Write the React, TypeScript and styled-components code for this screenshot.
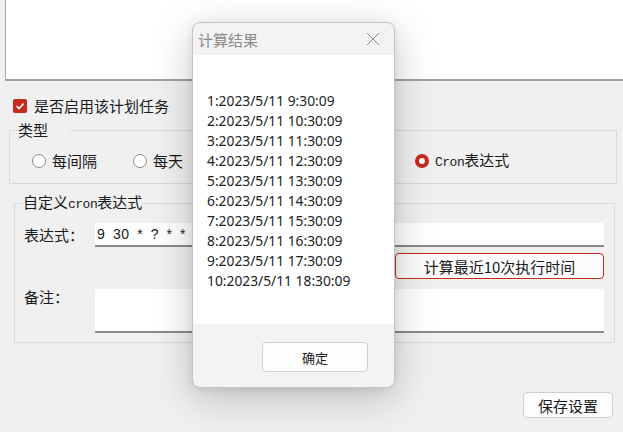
import styled, { createGlobalStyle } from 'styled-components';

const GlobalStyle = createGlobalStyle`
  html, body {
    margin: 0;
    padding: 0;
    background: #f0f0f0;
  }
  body {
    font-family: 'Noto Sans', 'Noto Sans CJK SC', sans-serif;
    color: #1a1a1a;
    overflow: hidden;
  }
`;

const CJK = `'Noto Sans CJK SC', 'Noto Sans', sans-serif`;
const ACCENT = '#c42b1c';

const runTimes = [
  '9:30:09',
  '10:30:09',
  '11:30:09',
  '12:30:09',
  '13:30:09',
  '14:30:09',
  '15:30:09',
  '16:30:09',
  '17:30:09',
  '18:30:09',
];

const App = () => {
  return (
    <>
      <GlobalStyle />
      <Page>
        <Description />
        <EnableRow>
          <CheckBox>
            <svg width="10" height="10" viewBox="0 0 10 10">
              <path d="M1.6 5.2 L4 7.5 L8.6 2.6" fill="none" stroke="#fff" strokeWidth="1.6" />
            </svg>
          </CheckBox>
          <EnableLabel>是否启用该计划任务</EnableLabel>
        </EnableRow>

        <TypeGroup>
          <GroupLegend>类型</GroupLegend>
          <RadioRow>
            <RadioOption $width={101}>
              <Radio />
              <RadioText>每间隔</RadioText>
            </RadioOption>
            <RadioOption $width={282}>
              <Radio />
              <RadioText>每天</RadioText>
            </RadioOption>
            <RadioOption>
              <Radio $checked />
              <RadioText>
                <Mono>Cron</Mono>表达式
              </RadioText>
            </RadioOption>
          </RadioRow>
        </TypeGroup>

        <CronGroup>
          <CronLegend>
            自定义<Mono>cron</Mono>表达式
          </CronLegend>
          <FieldRow $gap={8}>
            <FieldLabel>表达式：</FieldLabel>
            <TextInput readOnly value="9 30 * ? * *" />
          </FieldRow>
          <ButtonRow>
            <CalcButton>计算最近10次执行时间</CalcButton>
          </ButtonRow>
          <FieldRow $gap={6}>
            <FieldLabel>备注：</FieldLabel>
            <TextArea />
          </FieldRow>
        </CronGroup>

        <Footer>
          <SaveButton>保存设置</SaveButton>
        </Footer>

        <Dialog>
          <DialogTitle>
            <DialogTitleText>计算结果</DialogTitleText>
            <CloseIcon width="14" height="14" viewBox="0 0 14 14">
              <path d="M1 1 L13 13 M13 1 L1 13" stroke="#8a8a8a" strokeWidth="1" fill="none" />
            </CloseIcon>
          </DialogTitle>
          <DialogBody>
            {runTimes.map((time, i) => (
              <ResultLine key={time}>
                {i + 1}:2023/5/11 {time}
              </ResultLine>
            ))}
          </DialogBody>
          <DialogFooter>
            <OkButton>确定</OkButton>
          </DialogFooter>
        </Dialog>
      </Page>
    </>
  );
};

const Page = styled.div`
  position: relative;
  width: 623px;
  height: 432px;
  display: flex;
  flex-direction: column;
`;

const Description = styled.div`
  margin-left: 5px;
  height: 79px;
  background: #fff;
  border-left: 1px solid #a8a8a8;
  border-bottom: 2px solid #a0a0a0;
`;

const EnableRow = styled.div`
  display: flex;
  align-items: center;
  margin: 17px 0 0 13px;
  height: 16px;
`;

const CheckBox = styled.span`
  width: 14px;
  height: 14px;
  border-radius: 2px;
  background: ${ACCENT};
  display: flex;
  align-items: center;
  justify-content: center;
`;

const EnableLabel = styled.span`
  margin-left: 7px;
  font-family: ${CJK};
  font-size: 15px;
  line-height: 16px;
`;

const TypeGroup = styled.fieldset`
  margin: 6px 6px 0 9px;
  padding: 0 0 0 22px;
  height: 64px;
  box-sizing: border-box;
  border: 1px solid #dadada;
  border-radius: 0;
  min-width: 0;
`;

const GroupLegend = styled.legend`
  padding: 0;
  margin-left: 8px;
  font-family: ${CJK};
  font-size: 15px;
  line-height: 20px;
  transform: translateX(-22px);
`;

const RadioRow = styled.div`
  display: flex;
  align-items: center;
  height: 40px;
  margin-top: 1px;
`;

const RadioOption = styled.label<{ $width?: number }>`
  display: flex;
  align-items: center;
  width: ${({ $width }) => ($width ? `${$width}px` : 'auto')};
`;

const Radio = styled.span<{ $checked?: boolean }>`
  width: 14px;
  height: 14px;
  box-sizing: border-box;
  border-radius: 50%;
  background: #fff;
  border: ${({ $checked }) => ($checked ? `4px solid ${ACCENT}` : '1px solid #8c8c8c')};
`;

const RadioText = styled.span`
  margin-left: 6px;
  font-family: ${CJK};
  font-size: 15px;
  line-height: 18px;
`;

const Mono = styled.span`
  font-family: 'Liberation Mono', 'DejaVu Sans Mono', monospace;
  font-size: 13px;
  letter-spacing: -0.5px;
`;

const CronGroup = styled.fieldset`
  margin: 8px 8px 0 14px;
  padding: 0 10px 8px 9px;
  height: 151px;
  box-sizing: border-box;
  border: 1px solid #dadada;
  min-width: 0;
  display: flex;
  flex-direction: column;
`;

const CronLegend = styled(GroupLegend)`
  margin-left: -1px;
  transform: none;
`;

const FieldRow = styled.div<{ $gap: number }>`
  display: flex;
  align-items: flex-start;
  margin-top: ${({ $gap }) => $gap}px;
`;

const FieldLabel = styled.span`
  width: 71px;
  font-family: ${CJK};
  font-size: 15px;
  line-height: 24px;
`;

const TextInput = styled.input`
  flex: 1;
  height: 24px;
  box-sizing: border-box;
  border: none;
  border-bottom: 2px solid #8a8a8a;
  border-radius: 2px 2px 0 0;
  background: #fff;
  padding: 0 2px;
  font-family: 'Liberation Sans', Arial, sans-serif;
  font-size: 14px;
  color: #1a1a1a;
  outline: none;
  word-spacing: 3px;
  letter-spacing: 0.6px;
`;

const ButtonRow = styled.div`
  display: flex;
  justify-content: flex-end;
  margin-top: 6px;
`;

const CalcButton = styled.button`
  width: 209px;
  height: 26px;
  box-sizing: border-box;
  border: 1.5px solid ${ACCENT};
  border-radius: 4px;
  background: #fcfcfc;
  font-family: ${CJK};
  font-size: 15px;
  color: #1a1a1a;
  padding: 0;
`;

const TextArea = styled.div`
  flex: 1;
  height: 44px;
  margin-top: 4px;
  box-sizing: border-box;
  background: #fff;
  border-bottom: 2px solid #8a8a8a;
  border-radius: 2px 2px 0 0;
`;

const Footer = styled.div`
  display: flex;
  justify-content: flex-end;
  padding: 49px 10px 0 0;
`;

const SaveButton = styled.button`
  width: 90px;
  height: 26px;
  box-sizing: border-box;
  border: 1px solid #d0d0d0;
  border-radius: 4px;
  background: #fdfdfd;
  font-family: ${CJK};
  font-size: 15px;
  color: #1a1a1a;
  padding: 0;
`;

const Dialog = styled.div`
  position: absolute;
  left: 192px;
  top: 22px;
  width: 203px;
  height: 366px;
  box-sizing: border-box;
  border: 1px solid #c4c4c4;
  border-radius: 8px;
  overflow: hidden;
  display: flex;
  flex-direction: column;
  background: #f3f3f3;
  box-shadow: 0 10px 40px rgba(0, 0, 0, 0.22), 0 2px 8px rgba(0, 0, 0, 0.08);
`;

const DialogTitle = styled.div`
  height: 32px;
  display: flex;
  align-items: center;
  justify-content: space-between;
  padding: 0 14px 0 5px;
`;

const DialogTitleText = styled.span`
  font-family: ${CJK};
  font-size: 15px;
  color: #8a8a8a;
`;

const CloseIcon = styled.svg`
  display: block;
`;

const DialogBody = styled.div`
  height: 269px;
  background: #fff;
  padding: 36px 0 0 14px;
  box-sizing: border-box;
`;

const ResultLine = styled.div`
  font-family: 'Noto Sans', 'Open Sans', sans-serif;
  font-size: 13.8px;
  line-height: 20px;
  color: #222;
`;

const DialogFooter = styled.div`
  flex: 1;
  display: flex;
  align-items: flex-start;
  justify-content: flex-end;
  padding: 18px 26px 0 0;
`;

const OkButton = styled.button`
  width: 106px;
  height: 30px;
  box-sizing: border-box;
  border: 1px solid #d0d0d0;
  border-radius: 4px;
  background: #fdfdfd;
  font-family: ${CJK};
  font-size: 13px;
  color: #1a1a1a;
  padding: 0;
`;

export default App;
